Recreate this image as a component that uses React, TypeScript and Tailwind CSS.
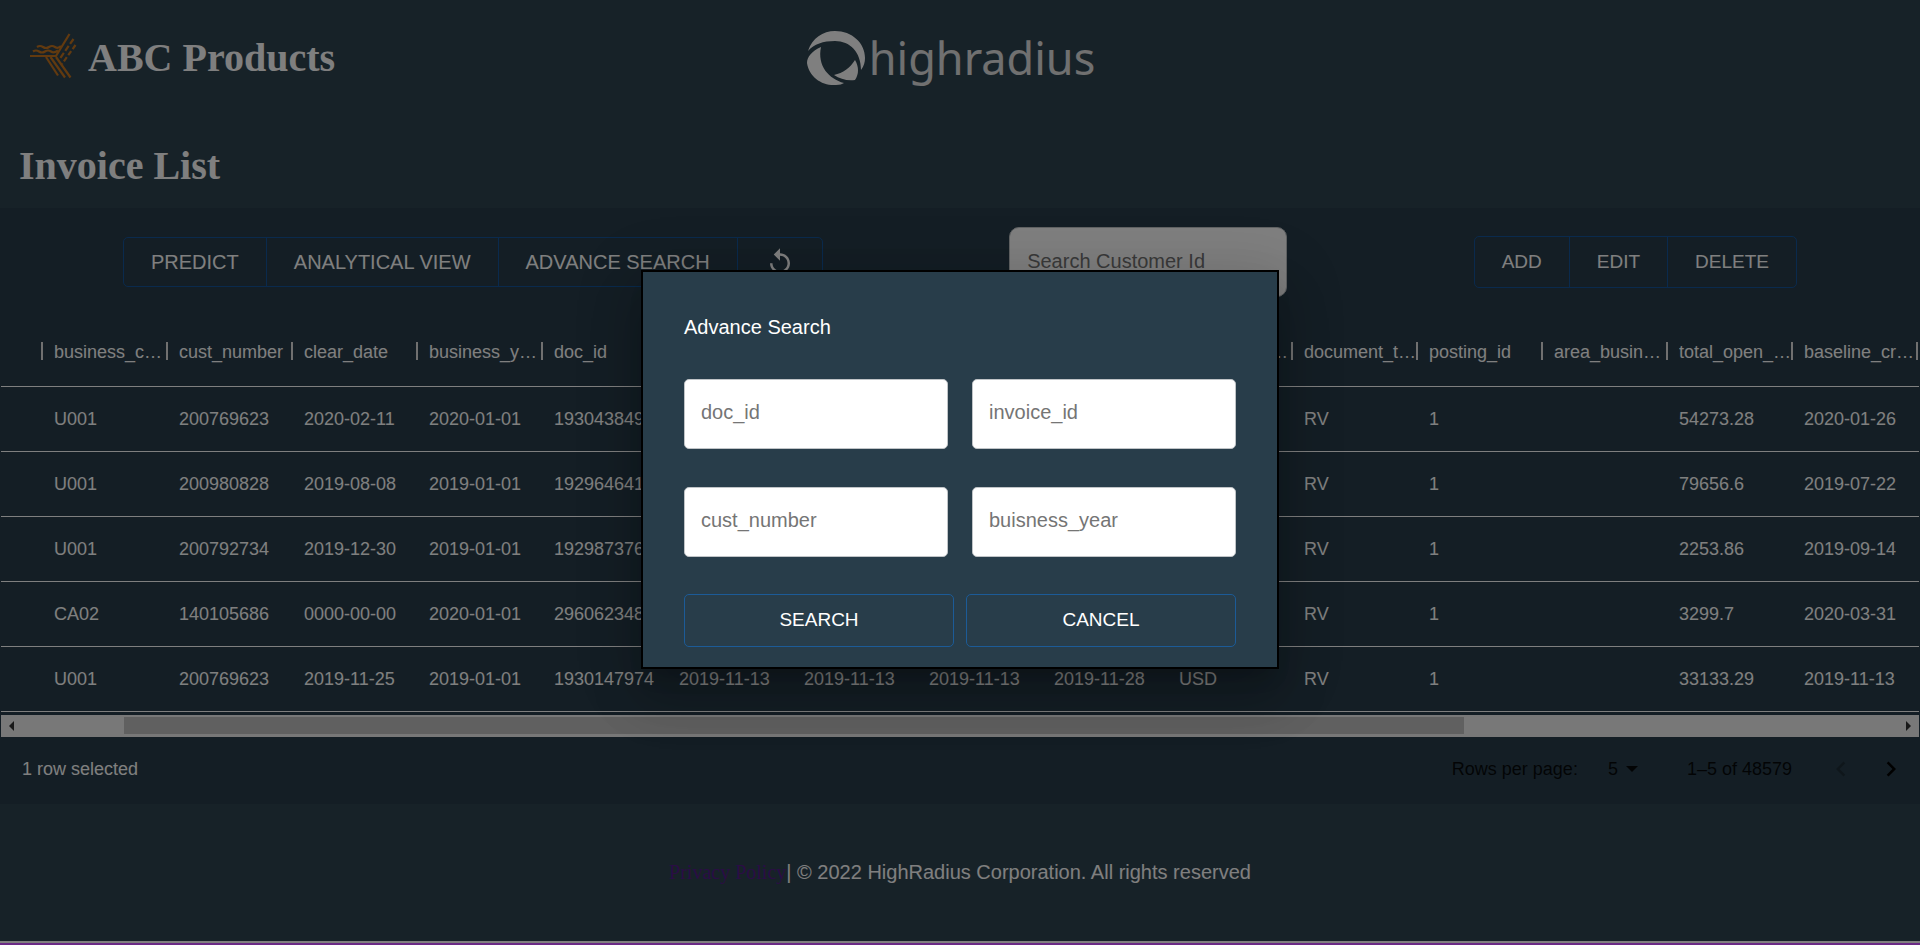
import type { ReactNode } from "react";

type Row = string[];

const columns = [
  "business_code",
  "cust_number",
  "clear_date",
  "business_year",
  "doc_id",
  "posting_date",
  "document_create_date",
  "due_in_date",
  "baseline_date",
  "invoice_currency",
  "document_type",
  "posting_id",
  "area_business",
  "total_open_amount",
  "baseline_create_date",
];

const rows: Row[] = [
  ["U001", "200769623", "2020-02-11", "2020-01-01", "1930438491", "2020-01-26", "2020-01-25", "2020-01-26", "2020-02-10", "USD", "RV", "1", "", "54273.28", "2020-01-26"],
  ["U001", "200980828", "2019-08-08", "2019-01-01", "1929646410", "2019-07-22", "2019-07-22", "2019-07-22", "2019-08-11", "USD", "RV", "1", "", "79656.6", "2019-07-22"],
  ["U001", "200792734", "2019-12-30", "2019-01-01", "1929873765", "2019-09-14", "2019-09-14", "2019-09-14", "2019-09-29", "USD", "RV", "1", "", "2253.86", "2019-09-14"],
  ["CA02", "140105686", "0000-00-00", "2020-01-01", "2960623488", "2020-03-30", "2020-03-30", "2020-03-30", "2020-04-10", "CAD", "RV", "1", "", "3299.7", "2020-03-31"],
  ["U001", "200769623", "2019-11-25", "2019-01-01", "1930147974", "2019-11-13", "2019-11-13", "2019-11-13", "2019-11-28", "USD", "RV", "1", "", "33133.29", "2019-11-13"],
];

function AbcMark() {
  return (
    <svg viewBox="0 0 46 46" className="h-[46px] w-[46px] overflow-visible" fill="none" stroke="#c4741f" strokeWidth="2.200" aria-hidden="true">
      <path d="M0 21h26L39.500-1" />
      <path d="M3 16.500q3-2 6 0t6 0 6 0 7-1" />
      <path d="M7 12q3-2 6 0t6 0 6 0 6-1" />
      <path d="M43.500 4 29 25" strokeDasharray="6 2.500" />
      <path d="M45.500 10 32 29" strokeDasharray="5 2.500" />
      <path d="M16 22 28 40.500M20.500 22 35 42.500M26 22 40.500 42.500" />
    </svg>
  );
}

function RadiusMark() {
  return (
    <svg viewBox="0 0 58 56" className="h-14 w-[58px]" fill="#fff" aria-hidden="true">
      <path d="M1 21C5 8 16 1 28 1c17 0 30 12 30 27 0 4-1 8-4 12C54 22 43 11 28 11 16 11 7 14 1 21Z" />
      <path d="M14 17C5 21 0 27 0 33c2 14 15 23 29 22 4 0 6-1 8-2C22 49 10 36 14 17Z" />
      <path d="M48 30c4 7 4 14 0 20-8 1-15-1-21-5 9-2 16-7 21-15Z" />
    </svg>
  );
}

function GroupButton({ children, label, size }: { children: ReactNode; label?: string; size: string }) {
  return (
    <button type="button" aria-label={label} className={`flex items-center border-r border-[#15549a] px-[27px] text-white last:border-r-0 ${size}`}>
      {children}
    </button>
  );
}

function Field({ name }: { name: string }) {
  return (
    <input
      type="text"
      aria-label={name}
      placeholder={name}
      className="h-[70px] w-full min-w-0 rounded-[5px] border border-[#c0c4c7] bg-white px-4 pb-0.5 text-[20px] text-black placeholder:text-[#757575]"
    />
  );
}

export default function App() {
  return (
    <div className="relative flex min-h-screen flex-col bg-[#2f4450] font-['Liberation_Sans',Arial,sans-serif] text-white">
      <header className="grid h-[116px] grid-cols-3 items-center px-[30px]">
        <div className="flex items-center gap-3">
          <AbcMark />
          <span className="font-['Liberation_Serif',serif] text-[40px] leading-[46px] font-bold">ABC Products</span>
        </div>
        <div className="flex items-center justify-center gap-1 pr-[18px]">
          <RadiusMark />
          <span className="font-['Noto_Sans',sans-serif] text-[45px] leading-[56px] text-[#e0e0e0]">highradius</span>
        </div>
      </header>
      <h1 className="h-[92px] px-[19px] pt-[27px] font-['Liberation_Serif',serif] text-[40px] leading-[46px] font-bold">Invoice List</h1>

      <main className="bg-[#283d4a] px-px">
        <div className="flex h-[108px] items-center justify-between px-[122px]">
          <div className="flex h-[50px] rounded-[5px] border border-[#15549a]">
            <GroupButton size="text-[20px]">PREDICT</GroupButton>
            <GroupButton size="text-[20px]">ANALYTICAL VIEW</GroupButton>
            <GroupButton size="text-[20px]">ADVANCE SEARCH</GroupButton>
            <GroupButton size="text-[20px]" label="Refresh">
              <svg viewBox="0 0 24 24" className="h-[30px] w-[30px]" fill="currentColor" aria-hidden="true">
                <path d="M12 5V1L7 6l5 5V7c3.310 0 6 2.690 6 6s-2.690 6-6 6-6-2.690-6-6H4c0 4.420 3.580 8 8 8s8-3.580 8-8-3.580-8-8-8z" />
              </svg>
            </GroupButton>
          </div>
          <input
            type="search"
            aria-label="Search Customer Id"
            placeholder="Search Customer Id"
            className="h-[70px] w-[278px] rounded-[10px] border border-[#c0c4c7] bg-white px-[17px] pb-0.5 text-[20px] text-black placeholder:text-[#757575]"
          />
          <div className="flex h-[52px] rounded-[5px] border border-[#15549a]">
            <GroupButton size="text-[19px]">ADD</GroupButton>
            <GroupButton size="text-[19px]">EDIT</GroupButton>
            <GroupButton size="text-[19px]">DELETE</GroupButton>
          </div>
        </div>

        <div className="overflow-hidden">
          <table className="w-full min-w-[1916px] table-fixed border-collapse text-left text-[18px]">
            <colgroup>
              <col className="w-[41px]" />
              {columns.map((c) => (
                <col key={c} className="w-[125px]" />
              ))}
              <col />
            </colgroup>
            <thead>
              <tr className="h-[70px] border-b border-white">
                <td className="relative">
                  <span className="absolute top-1/2 -right-px h-[18px] w-0.5 -translate-y-1/2 bg-[#e0e0e0]" />
                </td>
                {columns.map((c) => (
                  <th key={c} scope="col" className="relative pt-1 pl-3 font-normal">
                    <div className="truncate">{c}</div>
                    <span className="absolute top-1/2 -right-px h-[18px] w-0.5 -translate-y-1/2 bg-[#e0e0e0]" />
                  </th>
                ))}
                <td />
              </tr>
            </thead>
            <tbody>
              {rows.map((row, r) => (
                <tr key={r} className="h-[65px] border-b border-white">
                  <td />
                  {row.map((cell, i) => (
                    <td key={i} className="pt-0.5 pl-3">
                      {cell}
                    </td>
                  ))}
                  <td />
                </tr>
              ))}
            </tbody>
          </table>
        </div>

        <div className="mt-[3px] flex h-[22px] items-center justify-between bg-[#f1f1f1] px-2">
          <svg viewBox="0 0 5 10" className="h-2.5 w-[5px]" fill="#333" aria-hidden="true">
            <path d="M5 0v10L0 5z" />
          </svg>
          <div className="mx-2 flex-1">
            <div className="ml-[5.45%] h-[17px] w-[71.4%] bg-[#c1c1c1]" />
          </div>
          <svg viewBox="0 0 5 10" className="h-2.5 w-[5px]" fill="#333" aria-hidden="true">
            <path d="M0 0v10l5-5z" />
          </svg>
        </div>

        <div className="flex h-[67px] items-center justify-between pr-[13px] pb-0.5 pl-[21px] text-[18px]">
          <span>1 row selected</span>
          <div className="flex items-center text-black/85">
            <label htmlFor="page-size">Rows per page:</label>
            <div className="ml-[30px] flex items-center">
              <select id="page-size" className="w-[18px] appearance-none bg-transparent">
                <option>5</option>
              </select>
              <svg viewBox="0 0 12 6" className="mr-[49px] h-1.5 w-3" fill="currentColor" aria-hidden="true">
                <path d="M0 0h12L6 6z" />
              </svg>
            </div>
            <span>1–5 of 48579</span>
            <button type="button" aria-label="Previous page" disabled className="ml-[34px] text-black/25">
              <svg viewBox="0 0 24 24" className="h-[30px] w-[30px]" fill="currentColor">
                <path d="M15.410 7.410 14 6l-6 6 6 6 1.410-1.410L10.830 12z" />
              </svg>
            </button>
            <button type="button" aria-label="Next page" className="ml-5 text-black">
              <svg viewBox="0 0 24 24" className="h-[30px] w-[30px]" fill="currentColor">
                <path d="M10 6 8.590 7.410 13.170 12l-4.580 4.590L10 18l6-6z" />
              </svg>
            </button>
          </div>
        </div>
      </main>

      <footer className="flex flex-1 flex-col text-center text-[20px] leading-6">
        <p className="flex-1 pt-14">
          <a href="#privacy" className="font-['Liberation_Serif',serif] text-[#551a8b]">Privacy Policy</a>| © 2022 HighRadius Corporation. All rights reserved
        </p>
        <div className="h-1 border-t-2 border-white bg-[#6b2a86]" />
      </footer>

      <div className="absolute inset-x-0 top-0 bottom-0.5 flex items-center justify-center bg-black/50 pb-[5px]">
        <div
          role="dialog"
          aria-modal="true"
          aria-labelledby="dialog-title"
          className="w-[638px] border-2 border-black bg-[#283d4a] px-[41px] pt-10 pb-5 shadow-[0_14px_19px_-9px_rgba(0,0,0,0.2),0_30px_48px_4px_rgba(0,0,0,0.14),0_11px_58px_10px_rgba(0,0,0,0.12)]"
        >
          <h2 id="dialog-title" className="text-[20px] leading-[30px]">Advance Search</h2>
          <div className="mt-[37px] grid grid-cols-2 gap-x-6 gap-y-[38px]">
            <Field name="doc_id" />
            <Field name="invoice_id" />
            <Field name="cust_number" />
            <Field name="buisness_year" />
          </div>
          <div className="mt-[37px] grid grid-cols-2 gap-3 text-[19px]">
            <button type="button" className="h-[53px] rounded-[5px] border border-[#1c5b97]">SEARCH</button>
            <button type="button" className="h-[53px] rounded-[5px] border border-[#1c5b97]">CANCEL</button>
          </div>
        </div>
      </div>
      <div className="absolute inset-x-0 bottom-0 h-0.5 bg-[#6b2a86]" />
    </div>
  );
}
